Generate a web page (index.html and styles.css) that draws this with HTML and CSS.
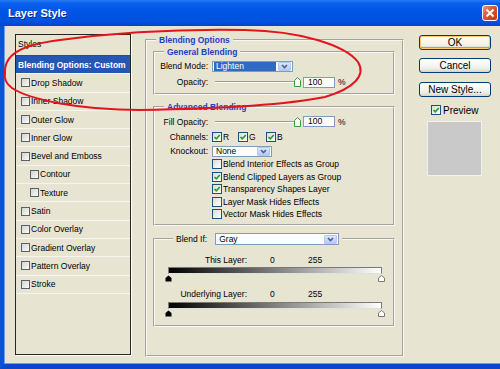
FILE: index.html
```html
<!DOCTYPE html>
<html lang="en">
<head>
    <meta charset="UTF-8">
    <title>Layer Style</title>
    <link rel="stylesheet" href="styles.css">
</head>
<body>

<div class="window">
    <div class="titlebar">
        <span class="title">Layer Style</span>
        <span class="close">
            <svg width="10" height="10" viewBox="0 0 10 10"><path d="M1.5 1.5 L8.5 8.5 M8.5 1.5 L1.5 8.5"/></svg>
        </span>
    </div>

    <div class="frame">
        <div class="content">

            <!-- list of layer effects -->
            <div class="styles-list">
                <div class="styles-head">Styles</div>
                <div class="style-item selected">Blending Options: Custom</div>
                <div class="style-item"><span class="box"></span>Drop Shadow</div>
                <div class="style-item"><span class="box"></span>Inner Shadow</div>
                <div class="style-item"><span class="box"></span>Outer Glow</div>
                <div class="style-item"><span class="box"></span>Inner Glow</div>
                <div class="style-item"><span class="box"></span>Bevel and Emboss</div>
                <div class="style-item sub"><span class="box"></span>Contour</div>
                <div class="style-item sub"><span class="box"></span>Texture</div>
                <div class="style-item"><span class="box"></span>Satin</div>
                <div class="style-item"><span class="box"></span>Color Overlay</div>
                <div class="style-item"><span class="box"></span>Gradient Overlay</div>
                <div class="style-item"><span class="box"></span>Pattern Overlay</div>
                <div class="style-item"><span class="box"></span>Stroke</div>
            </div>

            <!-- blending options -->
            <fieldset class="group main-group">
                <legend>Blending Options</legend>

                <fieldset class="group general">
                    <legend>General Blending</legend>
                    <div class="row">
                        <label>Blend Mode:</label>
                        <div class="combo mode">
                            <span class="val picked">Lighten</span>
                            <span class="arrow"><svg viewBox="0 0 7 5"><path d="M1 1 L3.5 3.5 L6 1"/></svg></span>
                        </div>
                    </div>
                    <div class="row">
                        <label>Opacity:</label>
                        <div class="slider"><svg class="thumb" viewBox="0 0 7 10"><polygon points="0.5,3.5 3.5,0.5 6.5,3.5 6.5,9.5 0.5,9.5"/></svg></div>
                        <span class="num">100</span>
                        <span class="pct">%</span>
                    </div>
                </fieldset>

                <fieldset class="group advanced">
                    <legend>Advanced Blending</legend>
                    <div class="row">
                        <label>Fill Opacity:</label>
                        <div class="slider"><svg class="thumb" viewBox="0 0 7 10"><polygon points="0.5,3.5 3.5,0.5 6.5,3.5 6.5,9.5 0.5,9.5"/></svg></div>
                        <span class="num">100</span>
                        <span class="pct">%</span>
                    </div>
                    <div class="row">
                        <label>Channels:</label>
                        <span class="chan"><span class="cb"><svg viewBox="0 0 8 8"><path d="M1.5 4 L3.3 5.8 L6.8 2"/></svg></span>R</span>
                        <span class="chan"><span class="cb"><svg viewBox="0 0 8 8"><path d="M1.5 4 L3.3 5.8 L6.8 2"/></svg></span>G</span>
                        <span class="chan"><span class="cb"><svg viewBox="0 0 8 8"><path d="M1.5 4 L3.3 5.8 L6.8 2"/></svg></span>B</span>
                    </div>
                    <div class="row knock">
                        <label>Knockout:</label>
                        <div class="combo knockout">
                            <span class="val">None</span>
                            <span class="arrow"><svg viewBox="0 0 7 5"><path d="M1 1 L3.5 3.5 L6 1"/></svg></span>
                        </div>
                    </div>
                    <div class="check-row"><span class="cb"></span>Blend Interior Effects as Group</div>
                    <div class="check-row"><span class="cb"><svg viewBox="0 0 8 8"><path d="M1.5 4 L3.3 5.8 L6.8 2"/></svg></span>Blend Clipped Layers as Group</div>
                    <div class="check-row"><span class="cb"><svg viewBox="0 0 8 8"><path d="M1.5 4 L3.3 5.8 L6.8 2"/></svg></span>Transparency Shapes Layer</div>
                    <div class="check-row"><span class="cb"></span>Layer Mask Hides Effects</div>
                    <div class="check-row"><span class="cb"></span>Vector Mask Hides Effects</div>
                </fieldset>

                <fieldset class="group blendif">
                    <legend>
                        <span class="if-label">Blend If:</span>
                        <span class="combo gray">
                            <span class="val">Gray</span>
                            <span class="arrow"><svg viewBox="0 0 7 5"><path d="M1 1 L3.5 3.5 L6 1"/></svg></span>
                        </span>
                    </legend>

                    <div class="layer-row">
                        <span class="name">This Layer:</span>
                        <span class="lo">0</span>
                        <span>255</span>
                    </div>
                    <div class="bar"></div>
                    <div class="handles">
                        <svg viewBox="0 0 7 7"><polygon class="dark" points="3.5,0.5 6.5,3 6.5,6.5 0.5,6.5 0.5,3"/></svg>
                        <svg viewBox="0 0 7 7"><polygon class="light" points="3.5,0.5 6.5,3 6.5,6.5 0.5,6.5 0.5,3"/></svg>
                    </div>

                    <div class="layer-row second">
                        <span class="name">Underlying Layer:</span>
                        <span class="lo">0</span>
                        <span>255</span>
                    </div>
                    <div class="bar"></div>
                    <div class="handles">
                        <svg viewBox="0 0 7 7"><polygon class="dark" points="3.5,0.5 6.5,3 6.5,6.5 0.5,6.5 0.5,3"/></svg>
                        <svg viewBox="0 0 7 7"><polygon class="light" points="3.5,0.5 6.5,3 6.5,6.5 0.5,6.5 0.5,3"/></svg>
                    </div>
                </fieldset>
            </fieldset>

            <!-- dialog buttons -->
            <div class="buttons">
                <div class="btn default">OK</div>
                <div class="btn cancel">Cancel</div>
                <div class="btn newstyle">New Style...</div>
                <div class="preview-row">
                    <span class="cb"><svg viewBox="0 0 8 8"><path d="M1.5 4 L3.3 5.8 L6.8 2"/></svg></span>Preview
                </div>
                <div class="swatch"></div>
            </div>

        </div>
    </div>

    <!-- red hand-drawn mark over the dialog -->
    <svg class="annotation" width="500" height="369" viewBox="0 0 500 369">
        <path d="M5 73 C4 55, 20 45, 60 40 C120 32, 190 29, 245 30 C300 31, 345 45, 358 62 C366 75, 355 88, 325 97 C280 106, 200 109, 140 110 C80 110, 30 100, 12 88 C5 83, 4 78, 5 73 Z"/>
    </svg>
</div>

</body>
</html>
```

FILE: styles.css
```css
* {
    box-sizing: border-box;
}
body {
    margin: 0;
    font-family: "Liberation Sans", Arial, sans-serif;
    font-size: 8.5px;
    color: #000;
    background: #e7e4d1;
}
.window {
    position: relative;
    width: 500px;
    height: 369px;
    overflow: hidden;
    background: #e7e4d1;
}

/* title bar */
.titlebar {
    height: 26px;
    display: flex;
    align-items: center;
    justify-content: space-between;
    padding: 0 2px 0 8px;
    background: linear-gradient(#2a7cf6 0, #0b62ec 3px, #0056e6 40%, #0052df 80%, #0145c8 100%);
}
.title {
    color: #fff;
    font-size: 11px;
    font-weight: bold;
    text-shadow: 1px 1px 0 #0a2a8a;
}
.close {
    width: 16px;
    height: 16px;
    border: 1px solid #fff;
    border-radius: 3px;
    background: linear-gradient(135deg, #e99a7e, #d9552c 45%, #c23d18);
    display: flex;
    align-items: center;
    justify-content: center;
}
.close svg path {
    stroke: #fff;
    stroke-width: 2;
    fill: none;
}

.frame {
    height: 343px;
    border-left: 4px solid #0a52d8;
    border-bottom: 5px solid #0a48c8;
    box-shadow: inset 1px -1px 0 #6b9cf0;
}
.content {
    display: flex;
    align-items: flex-start;
    padding: 8px 0 0 11px;
}

/* styles list */
.styles-list {
    width: 116px;
    height: 321px;
    border: 1px solid #262626;
    box-shadow: 1px 1px 0 #fff;
    margin-right: 14px;
}
.styles-head {
    height: 21px;
    line-height: 19px;
    padding-left: 2px;
    border-bottom: 1px solid #4a4a44;
    box-shadow: 0 1px 0 #fff;
}
.style-item {
    height: 18.3px;
    display: flex;
    align-items: center;
    padding-left: 5px;
    border-bottom: 1px solid #f6f5ee;
}
.style-item.selected {
    background: #2456b4;
    color: #fff;
    font-weight: bold;
    padding-left: 2px;
}
.style-item.sub {
    padding-left: 14px;
}
.box {
    width: 9px;
    height: 9px;
    margin-right: 1px;
    border: 1px solid #56606e;
    background: linear-gradient(135deg, #d4d4cc, #fbfbf8);
}

/* group boxes */
.group {
    margin: 0;
    min-width: 0;
    border: 2px groove #f8f7f0;
}
.group > legend {
    font-weight: bold;
    color: #1d3fc4;
    line-height: 12px;
    padding: 0 3px;
    margin-left: 5px;
}
.main-group {
    width: 259px;
    height: 323px;
    padding: 0 7px 0 6px;
}
.main-group > legend {
    margin-left: 3px;
}
.general {
    padding: 0 4px 3px 4px;
}
.advanced {
    margin-top: 6px;
    padding: 1px 4px 3px 4px;
}
.blendif {
    margin-top: 7px;
    padding: 0 11px 8px 13px;
}

.row {
    display: flex;
    align-items: center;
    height: 16px;
}
.advanced .row {
    height: 15px;
}
.advanced .row.knock {
    height: 14px;
}
.row label {
    width: 49px;
    margin-right: 4px;
    text-align: right;
}

/* combo boxes */
.combo {
    display: flex;
    align-items: center;
    height: 11px;
    padding: 0 1px;
    border: 1px solid #7f9db9;
    background: #fff;
    font-weight: normal;
    color: #000;
}
.combo .val {
    line-height: 9px;
    padding-left: 2px;
}
.combo .val.picked {
    width: 62px;
    background: #316ac5;
    color: #fff;
}
.arrow {
    width: 13px;
    height: 9px;
    margin-left: auto;
    border: 1px solid #b4c7f5;
    border-radius: 1px;
    background: linear-gradient(#dbe6fe, #b5c8f7);
    display: flex;
    align-items: center;
    justify-content: center;
}
.arrow svg {
    width: 7px;
    height: 5px;
}
.arrow path {
    fill: none;
    stroke: #4d6185;
    stroke-width: 1.6;
}
.combo.mode {
    width: 81px;
}
.combo.knockout {
    width: 60px;
}
.combo.gray {
    width: 124px;
    height: 12px;
    margin-left: 8px;
}

/* sliders and numbers */
.slider {
    width: 86px;
    height: 10px;
    margin-left: 3px;
    display: flex;
    justify-content: flex-end;
    background:
        linear-gradient(#a19e8e, #a19e8e) no-repeat 0 4px / 83px 1px,
        linear-gradient(#fff, #fff) no-repeat 0 5px / 83px 1px;
}
.thumb {
    width: 7px;
    height: 10px;
}
.thumb polygon {
    fill: #fcfcfa;
    stroke: #3f9a3f;
    stroke-width: 1;
}
.num {
    width: 32px;
    height: 11px;
    margin-left: 2px;
    padding-left: 4px;
    line-height: 9px;
    border: 1px solid #7f9db9;
    background: #fff;
}
.pct {
    margin-left: 3px;
}

/* checkboxes */
.cb {
    width: 10px;
    height: 10px;
    margin-right: 1px;
    border: 1px solid #1c5180;
    background: linear-gradient(135deg, #dcdcd6, #fff);
    display: inline-flex;
    align-items: center;
    justify-content: center;
    flex-shrink: 0;
}
.cb svg {
    width: 8px;
    height: 8px;
}
.cb path {
    fill: none;
    stroke: #21a121;
    stroke-width: 1.7;
}
.chan {
    display: flex;
    align-items: center;
    width: 26px;
}
.chan + .chan {
    width: 28px;
}
.check-row {
    display: flex;
    align-items: center;
    height: 12.5px;
    padding-left: 53px;
}

/* blend if */
.blendif > legend {
    display: flex;
    align-items: center;
    color: #000;
    font-weight: normal;
    line-height: 13px;
}
.layer-row {
    display: flex;
    align-items: center;
    height: 10px;
    margin-top: 9px;
}
.layer-row.second {
    margin-top: 7px;
}
.layer-row .name {
    width: 79px;
    text-align: right;
}
.layer-row .lo {
    width: 38px;
    margin-left: 23px;
}
.bar {
    height: 7px;
    margin-top: 2.5px;
    border: 1px solid #7a7a72;
    border-bottom-color: #e0e0e0;
    background: linear-gradient(to right, #000, #fff);
}
.handles {
    display: flex;
    justify-content: space-between;
    height: 7px;
    margin: 1px -3px 0;
}
.handles svg {
    width: 7px;
    height: 7px;
}
.handles .dark {
    fill: #000;
}
.handles .light {
    fill: #fff;
    stroke: #777;
    stroke-width: 1;
}

/* buttons */
.buttons {
    width: 72px;
    margin-left: 15px;
    padding-top: 1px;
    display: flex;
    flex-direction: column;
    font-size: 10px;
}
.btn {
    height: 15px;
    line-height: 13px;
    text-align: center;
    border: 1px solid #003c74;
    border-radius: 3px;
    background: linear-gradient(#fff, #f1f0ea 70%, #d8d3c6);
}
.btn.default {
    box-shadow: inset 0 0 0 1px #fcc96e, inset 0 -1px 0 1px #e59a1c;
}
.btn.cancel {
    margin-top: 8px;
}
.btn.newstyle {
    margin-top: 9px;
}
.preview-row {
    display: flex;
    align-items: center;
    height: 10px;
    margin-top: 8px;
    padding-left: 12px;
}
.preview-row .cb {
    margin-right: 2px;
}
.swatch {
    width: 55px;
    height: 55px;
    margin: 6px 0 0 8px;
    border: 1px solid #f2f1ec;
    background: #c9c9c9;
}

/* red mark drawn over the screenshot */
.annotation {
    position: absolute;
    top: 0;
    left: 0;
    pointer-events: none;
}
.annotation path {
    fill: none;
    stroke: #e3141c;
    stroke-width: 2;
}
```
